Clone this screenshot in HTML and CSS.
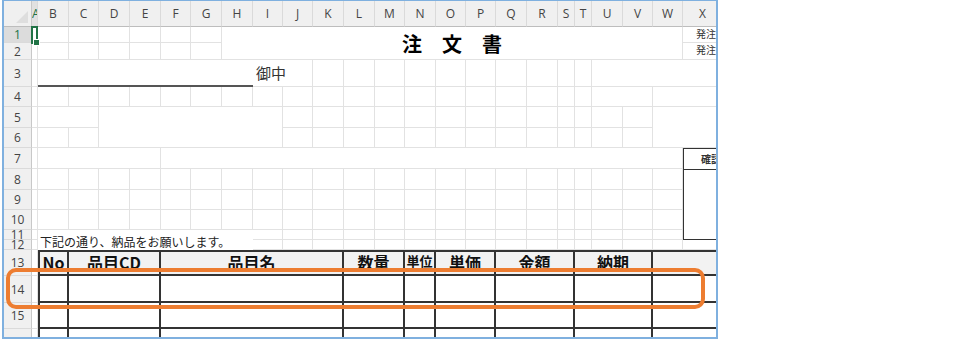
FILE: index.html
```html
<!DOCTYPE html>
<html lang="ja">
<head>
<meta charset="utf-8">
<title>注文書</title>
<link rel="stylesheet" href="styles.css">
</head>
<body>
<div class="window">
  <div class="sheet">
    <!-- column headers -->
    <div class="corner"></div>
    <div class="ch sel-col">A</div><div class="ch">B</div><div class="ch">C</div><div class="ch">D</div><div class="ch">E</div><div class="ch">F</div><div class="ch">G</div><div class="ch">H</div><div class="ch">I</div><div class="ch">J</div><div class="ch">K</div><div class="ch">L</div><div class="ch">M</div><div class="ch">N</div><div class="ch">O</div><div class="ch">P</div><div class="ch">Q</div><div class="ch">R</div><div class="ch">S</div><div class="ch">T</div><div class="ch">U</div><div class="ch">V</div><div class="ch">W</div><div class="ch">X</div>

    <!-- row 1 -->
    <div class="rh sel-row">1</div>
    <div class="c sel"></div><div class="c"></div><div class="c"></div><div class="c"></div><div class="c"></div><div class="c"></div><div class="c"></div>
    <div class="c w16 h2 title">注　文　書</div>
    <div class="c meta">発注日：</div>

    <!-- row 2 -->
    <div class="rh">2</div>
    <div class="c"></div><div class="c"></div><div class="c"></div><div class="c"></div><div class="c"></div><div class="c"></div><div class="c"></div>
    <div class="c meta">発注No：</div>

    <!-- row 3 -->
    <div class="rh">3</div>
    <div class="c"></div>
    <div class="c w7 underline"></div>
    <div class="c w2 onchu">御中</div>
    <div class="c"></div><div class="c"></div><div class="c"></div><div class="c"></div><div class="c"></div><div class="c"></div><div class="c"></div><div class="c"></div><div class="c"></div><div class="c"></div>
    <div class="c w4"></div>

    <!-- row 4 -->
    <div class="rh">4</div>
    <div class="c"></div>
    <div class="c"></div><div class="c"></div><div class="c"></div><div class="c"></div><div class="c"></div><div class="c"></div><div class="c"></div><div class="c"></div><div class="c"></div><div class="c"></div><div class="c"></div><div class="c"></div><div class="c"></div><div class="c"></div><div class="c"></div><div class="c"></div><div class="c"></div><div class="c"></div><div class="c"></div>
    <div class="c w2"></div><div class="c w2"></div>

    <!-- row 5 -->
    <div class="rh">5</div>
    <div class="c"></div>
    <div class="c w2"></div>
    <div class="c w6 h2"></div>
    <div class="c"></div><div class="c"></div><div class="c"></div><div class="c"></div><div class="c"></div><div class="c"></div><div class="c"></div><div class="c"></div><div class="c"></div><div class="c"></div><div class="c"></div><div class="c"></div><div class="c"></div>
    <div class="c w2 h2"></div>

    <!-- row 6 -->
    <div class="rh">6</div>
    <div class="c"></div>
    <div class="c"></div><div class="c"></div>
    <div class="c"></div><div class="c"></div><div class="c"></div><div class="c"></div><div class="c"></div><div class="c"></div><div class="c"></div><div class="c"></div><div class="c"></div><div class="c"></div><div class="c"></div><div class="c"></div><div class="c"></div>

    <!-- row 7 -->
    <div class="rh">7</div>
    <div class="c"></div>
    <div class="c w4"></div>
    <div class="c w18"></div>
    <div class="c h5 confirm"><div class="confirm-head">確認</div></div>

    <!-- row 8 -->
    <div class="rh">8</div>
    <div class="c"></div>
    <div class="c"></div><div class="c"></div><div class="c"></div><div class="c"></div><div class="c"></div><div class="c"></div><div class="c"></div><div class="c"></div><div class="c"></div><div class="c"></div><div class="c"></div><div class="c"></div><div class="c"></div><div class="c"></div><div class="c"></div><div class="c"></div><div class="c"></div><div class="c"></div><div class="c"></div><div class="c"></div><div class="c"></div><div class="c"></div>

    <!-- row 9 -->
    <div class="rh">9</div>
    <div class="c"></div>
    <div class="c"></div><div class="c"></div><div class="c"></div><div class="c"></div><div class="c"></div><div class="c"></div><div class="c"></div><div class="c"></div><div class="c"></div><div class="c"></div><div class="c"></div><div class="c"></div><div class="c"></div><div class="c"></div><div class="c"></div><div class="c"></div><div class="c"></div><div class="c"></div><div class="c"></div><div class="c"></div><div class="c"></div><div class="c"></div>

    <!-- row 10 -->
    <div class="rh">10</div>
    <div class="c"></div>
    <div class="c"></div><div class="c"></div><div class="c"></div><div class="c"></div><div class="c"></div><div class="c"></div><div class="c"></div><div class="c"></div><div class="c"></div><div class="c"></div><div class="c"></div><div class="c"></div><div class="c"></div><div class="c"></div><div class="c"></div><div class="c"></div><div class="c"></div><div class="c"></div><div class="c"></div><div class="c"></div><div class="c"></div><div class="c"></div>

    <!-- row 11 -->
    <div class="rh">11</div>
    <div class="c"></div>
    <div class="c w7 h2 note">下記の通り、納品をお願いします。</div>
    <div class="c"></div><div class="c"></div><div class="c"></div><div class="c"></div><div class="c"></div><div class="c"></div><div class="c"></div><div class="c"></div><div class="c"></div><div class="c"></div><div class="c"></div><div class="c"></div><div class="c"></div><div class="c"></div><div class="c"></div>

    <!-- row 12 -->
    <div class="rh">12</div>
    <div class="c"></div>
    <div class="c"></div><div class="c"></div><div class="c"></div><div class="c"></div><div class="c"></div><div class="c"></div><div class="c"></div><div class="c"></div><div class="c"></div><div class="c"></div><div class="c"></div><div class="c"></div><div class="c"></div><div class="c"></div><div class="c"></div>
    <div class="c"></div>

    <!-- row 13 : table header -->
    <div class="rh">13</div>
    <div class="c"></div>
    <div class="t th first">No</div>
    <div class="t th w3">品目CD</div>
    <div class="t th w6">品目名</div>
    <div class="t th w2">数量</div>
    <div class="t th small">単位</div>
    <div class="t th w2">単価</div>
    <div class="t th w3">金額</div>
    <div class="t th w3">納期</div>
    <div class="t th w2"></div>

    <!-- row 14 -->
    <div class="rh">14</div>
    <div class="c"></div>
    <div class="t first"></div><div class="t w3"></div><div class="t w6"></div><div class="t w2"></div><div class="t"></div><div class="t w2"></div><div class="t w3"></div><div class="t w3"></div><div class="t w2"></div>

    <!-- row 15 -->
    <div class="rh">15</div>
    <div class="c"></div>
    <div class="t first"></div><div class="t w3"></div><div class="t w6"></div><div class="t w2"></div><div class="t"></div><div class="t w2"></div><div class="t w3"></div><div class="t w3"></div><div class="t w2"></div>

    <!-- row 16 -->
    <div class="rh">16</div>
    <div class="c"></div>
    <div class="t first"></div><div class="t w3"></div><div class="t w6"></div><div class="t w2"></div><div class="t"></div><div class="t w2"></div><div class="t w3"></div><div class="t w3"></div><div class="t w2"></div>
  </div>

  <div class="highlight"></div>
</div>
</body>
</html>
```

FILE: styles.css
```css
* {
  box-sizing: border-box;
}

body {
  margin: 0;
  background: #ffffff;
  font-family: "Noto Sans CJK JP", "Noto Sans", sans-serif;
  color: #222;
}

.window {
  position: relative;
  margin-left: 2px;
  width: 716px;
  height: 339px;
  border: 2px solid #7fb0df;
  border-top-width: 1px;
  overflow: hidden;
  background: #ffffff;
}

.sheet {
  display: grid;
  grid-template-columns:
    28px 6px 31px 30px 31px 31px 30px 31px 31px 30px 30px 31px 31px
    30px 31px 30px 30px 31px 31px 17px 17px 31px 30px 30px 40px;
  grid-template-rows:
    26px 16px 17px 27px 20px 21px 20px 21px 21px 20px 20px 10px 10px
    26px 27px 26px 26px;
}

/* headers */
.corner {
  position: relative;
  background: #f0f0f0;
  border-right: 1px solid #c8c8c8;
  border-bottom: 1px solid #bdbdbd;
}

.corner::after {
  content: "";
  position: absolute;
  right: 3px;
  bottom: 3px;
  border-left: 12px solid transparent;
  border-bottom: 12px solid #dedede;
}

.ch {
  display: flex;
  align-items: center;
  justify-content: center;
  overflow: hidden;
  background: #f0f0f0;
  border-right: 1px solid #dadada;
  border-bottom: 1px solid #bdbdbd;
  font-family: "Open Sans", "Noto Sans", sans-serif;
  font-size: 12px;
  color: #444;
}

.ch.sel-col {
  background: #e1e1e1;
  color: #217346;
  justify-content: flex-start;
  padding-left: 0;
}

.rh {
  display: flex;
  align-items: center;
  justify-content: center;
  overflow: hidden;
  background: #f0f0f0;
  border-right: 1px solid #c8c8c8;
  border-bottom: 1px solid #dadada;
  font-family: "Open Sans", "Noto Sans", sans-serif;
  font-size: 12px;
  color: #444;
}

.rh.sel-row {
  background: #dcdcdc;
  color: #217346;
}

/* body cells */
.c {
  border-right: 1px solid #e2e2e2;
  border-bottom: 1px solid #e2e2e2;
  min-width: 0;
  min-height: 0;
}

.w2 { grid-column: span 2; }
.w3 { grid-column: span 3; }
.w4 { grid-column: span 4; }
.w6 { grid-column: span 6; }
.w7 { grid-column: span 7; }
.w16 { grid-column: span 16; }
.w18 { grid-column: span 18; }
.h2 { grid-row: span 2; }
.h5 { grid-row: span 5; }

.sel {
  position: relative;
  z-index: 2;
}

.sel::after {
  content: "";
  position: absolute;
  left: -1px;
  top: -1px;
  right: -1px;
  bottom: -2px;
  border: 2px solid #217346;
}

.sel::before {
  content: "";
  position: absolute;
  right: -3px;
  bottom: -4px;
  width: 5px;
  height: 5px;
  background: #217346;
  border: 1px solid #ffffff;
  z-index: 3;
}

.title {
  display: flex;
  align-items: center;
  justify-content: center;
  font-size: 20px;
  font-weight: 700;
  color: #000;
  padding-top: 1px;
}

.meta {
  overflow: hidden;
  white-space: nowrap;
  font-size: 10px;
  line-height: 14px;
  padding-left: 13px;
  color: #333;
}

.underline {
  border-right: none;
  border-bottom: 2px solid #555;
}

.onchu {
  display: flex;
  align-items: center;
  padding-left: 3px;
  padding-bottom: 2px;
  font-size: 15px;
  color: #333;
}

.confirm {
  border: 1px solid #333;
  border-right: none;
  overflow: hidden;
}

.confirm-head {
  height: 21px;
  border-bottom: 1px solid #333;
  padding-left: 17px;
  font-size: 10px;
  font-weight: 700;
  line-height: 20px;
  white-space: nowrap;
  color: #333;
}

.note {
  display: flex;
  align-items: flex-end;
  border-right: none;
  border-bottom: none;
  padding-left: 2px;
  padding-bottom: 1px;
  font-size: 12px;
  line-height: 14px;
  white-space: nowrap;
  color: #222;
}

/* order table */
.t {
  display: flex;
  align-items: flex-end;
  justify-content: center;
  border-right: 2px solid #333;
  border-bottom: 2px solid #333;
  min-width: 0;
  overflow: hidden;
}

.t.first {
  border-left: 2px solid #333;
}

.th {
  background: #f2f2f2;
  border-top: 2px solid #333;
  padding-bottom: 2px;
  font-size: 16px;
  font-weight: 700;
  line-height: 19px;
  color: #111;
  white-space: nowrap;
}

.th.small {
  font-size: 13px;
  line-height: 17px;
  padding-bottom: 5px;
}

.highlight {
  position: absolute;
  left: 2px;
  top: 267px;
  width: 699px;
  height: 41px;
  border: 4px solid #ed7d31;
  border-radius: 10px;
  z-index: 5;
}
```
